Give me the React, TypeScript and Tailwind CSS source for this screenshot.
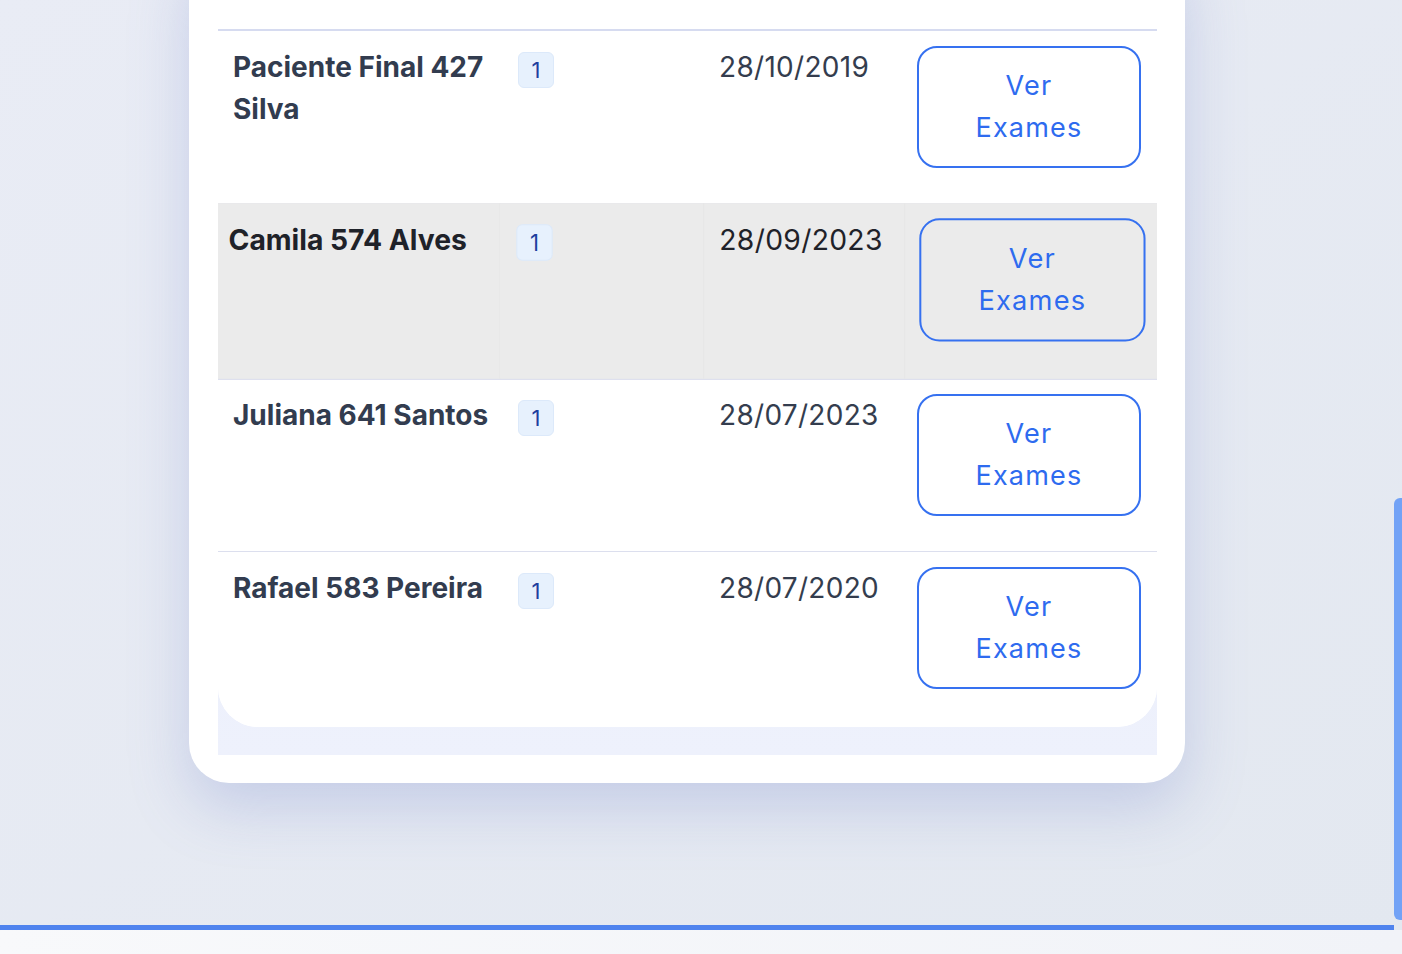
const rows = [
  { name: "Paciente Final 427 Silva", count: 1, date: "28/10/2019", h: "h-[173px]" },
  { name: "Camila 574 Alves", count: 1, date: "28/09/2023", h: "h-[175px]", active: true },
  { name: "Juliana 641 Santos", count: 1, date: "28/07/2023", h: "h-[173px]" },
  { name: "Rafael 583 Pereira", count: 1, date: "28/07/2020", h: "h-[175px]", last: true },
];

type Row = (typeof rows)[number];

const PatientRow = ({ row }: { row: Row }) => {
  const cell = row.active ? "border-r border-[#e7e7e7]" : "";
  const text = row.active ? "text-[#1f2229]" : "text-[#323c4f]";
  return (
    <div
      className={`grid grid-cols-[284px_202px_199px_1fr] ${row.h} ${
        row.last ? "" : "border-b border-[#dcdfee]"
      } ${row.active ? "bg-[#ebebeb] scale-[1.01]" : "bg-white"}`}
    >
      <div className={`pl-[15px] pr-[6px] pt-[15px] ${cell}`}>
        <span className={`text-[28px] leading-[42px] font-bold ${text}`}>{row.name}</span>
      </div>
      <div className={`pl-[16px] pt-[21px] ${cell}`}>
        <span className="flex h-[36px] w-[36px] items-center justify-center rounded-[6px] border border-[#dce9fa] bg-[#e7f1fd] text-[22px] text-[#1e3f9e]">
          {row.count}
        </span>
      </div>
      <div className={`pl-[15px] pt-[15px] ${cell}`}>
        <span
          className={`text-[28px] leading-[42px] tracking-[0.3px] ${
            row.active ? "text-[#1f2229]" : "text-[#343d4e]"
          }`}
        >
          {row.date}
        </span>
      </div>
      <div className="pl-[14px] pr-[15px] pt-[15px]">
        <button className="w-[224px] rounded-[20px] border-2 border-[#3671f0] px-[36px] py-[17px] text-center text-[27px] leading-[42px] tracking-[1.2px] text-[#2e6bef]">
          Ver Exames
        </button>
      </div>
    </div>
  );
};

const App = () => {
  return (
    <div className="flex h-[954px] w-full flex-col overflow-hidden bg-gradient-to-br from-[#e9ecf5] to-[#e3e8f0] font-['Inter','Noto_Sans',sans-serif]">
      <div className="relative flex h-[930px] shrink-0">
        <main className="h-[930px] w-[1394px] border-b-[5px] border-[#4f83ee]">
          <div className="ml-[189px] -mt-[60px] w-[996px] rounded-[40px] bg-white pl-[29px] pr-[28px] pb-[28px] shadow-[0_24px_60px_rgba(110,130,200,0.28)]">
            <div className="bg-gradient-to-b from-[#e3e9f9] to-[#eef1fc]">
              <div className="overflow-hidden rounded-b-[40px] bg-white">
                <div className="h-[91px] border-b-2 border-[#d6dbf0]" />
                {rows.map((row) => (
                  <PatientRow key={row.name} row={row} />
                ))}
              </div>
              <div className="h-[28px]" />
            </div>
          </div>
        </main>
        <div className="relative w-[8px]">
          <div className="absolute right-0 top-[498px] h-[422px] w-[8px] rounded-l-[6px] bg-[#72a2f6]" />
        </div>
      </div>
      <div className="flex-1 bg-gradient-to-r from-[#f8f9fb] to-[#f1f3f8]" />
    </div>
  );
};

export default App;
